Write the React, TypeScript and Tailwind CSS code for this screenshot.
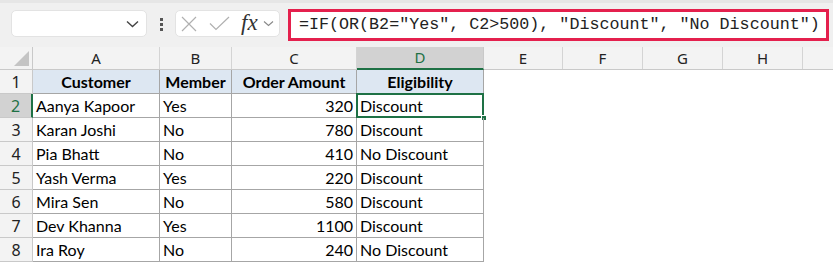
import React from 'react';

const cols = [
    { key: 'A', w: 127 },
    { key: 'B', w: 72 },
    { key: 'C', w: 125 },
    { key: 'D', w: 127 },
    { key: 'E', w: 79 },
    { key: 'F', w: 80 },
    { key: 'G', w: 80 },
    { key: 'H', w: 80 },
];

const data = [
    ['Aanya Kapoor', 'Yes', '320', 'Discount'],
    ['Karan Joshi', 'No', '780', 'Discount'],
    ['Pia Bhatt', 'No', '410', 'No Discount'],
    ['Yash Verma', 'Yes', '220', 'Discount'],
    ['Mira Sen', 'No', '580', 'Discount'],
    ['Dev Khanna', 'Yes', '1100', 'Discount'],
    ['Ira Roy', 'No', '240', 'No Discount'],
];

const cellFont = { fontFamily: 'Lato, "Noto Sans", sans-serif' };

export default function App() {
    return (
        <div className="w-[833px] h-[264px] overflow-hidden bg-white relative" style={{ fontFamily: '"Noto Sans", sans-serif' }}>
            {/* Toolbar / formula bar */}
            <div className="h-[47px] bg-[#f0f0f0] border-t-[3px] border-[#e6e6e6] flex items-start">
                <div className="ml-[11px] mt-[7px] w-[136px] h-[27px] bg-white rounded-[5px] border border-[#e3e3e3] flex items-center justify-end pr-[7px]">
                    <svg width="13" height="8" viewBox="0 0 13 8" fill="none" stroke="#444" strokeWidth="1.4">
                        <path d="M1 1.5 L6.5 6.5 L12 1.5" />
                    </svg>
                </div>
                <div className="w-[28px] h-[34px] flex flex-col items-center justify-center gap-[2px] mt-[4px]">
                    <span className="w-[3px] h-[3px] bg-[#555]" />
                    <span className="w-[3px] h-[3px] bg-[#555]" />
                    <span className="w-[3px] h-[3px] bg-[#555]" />
                </div>
                <div className="mt-[7px] w-[105px] h-[27px] bg-white rounded-[5px] border border-[#e3e3e3] flex items-center">
                    <svg className="ml-[5px]" width="16" height="16" viewBox="0 0 16 16" fill="none" stroke="#b0b0b0" strokeWidth="1.2">
                        <path d="M1 1 L15 15 M15 1 L1 15" />
                    </svg>
                    <svg className="ml-[12px]" width="21" height="15" viewBox="0 0 21 15" fill="none" stroke="#b0b0b0" strokeWidth="1.2">
                        <path d="M1 7.5 L7 13.5 L20 1" />
                    </svg>
                    <span className="ml-[11px] text-[23px] leading-none italic text-[#333] -mt-[3px]" style={{ fontFamily: '"Liberation Serif", serif' }}>
                        fx
                    </span>
                    <svg className="ml-[5px]" width="11" height="7" viewBox="0 0 11 7" fill="none" stroke="#888" strokeWidth="1.1">
                        <path d="M1 1.5 L5.5 5.5 L10 1.5" />
                    </svg>
                </div>
                <div className="ml-[8px] mt-[6px] w-[541px] h-[32px] bg-white border-[3px] border-[#e4204d] flex items-center pl-[8px]">
                    <span className="text-[16.7px] leading-none text-[#222] whitespace-nowrap" style={{ fontFamily: '"Liberation Mono", monospace' }}>
                        =IF(OR(B2="Yes", C2&gt;500), "Discount", "No Discount")
                    </span>
                </div>
            </div>

            {/* Column headers */}
            <div className="flex h-[23px] bg-[#f3f3f3] border-b border-[#c9c9c9]">
                <div className="w-[33px] shrink-0 border-r border-[#c9c9c9] relative">
                    <svg className="absolute right-[3px] bottom-[3px]" width="15" height="15" viewBox="0 0 15 15">
                        <path d="M15 0 L15 15 L0 15 Z" fill="#c4c4c4" />
                    </svg>
                </div>
                {cols.map(c => (
                    <div
                        key={c.key}
                        style={{ width: c.w }}
                        className={
                            c.key === 'D'
                                ? 'shrink-0 flex items-center justify-center text-[15px] text-[#1e7145] bg-[#d2d2d2] border-r border-[#c9c9c9] border-b-2 border-b-[#1e7145] -mb-px'
                                : 'shrink-0 flex items-center justify-center text-[15px] text-[#222] border-r border-[#d4d4d4]'
                        }
                    >
                        {c.key}
                    </div>
                ))}
                <div className="flex-1" />
            </div>

            {/* Header row 1 */}
            <div className="flex h-[24px]">
                <div className="w-[33px] shrink-0 bg-[#f3f3f3] border-r border-b border-[#c9c9c9] flex items-center justify-center text-[16px] text-[#222]">1</div>
                {['Customer', 'Member', 'Order Amount', 'Eligibility'].map((h, i) => (
                    <div
                        key={h}
                        style={{ width: cols[i].w, ...cellFont }}
                        className="shrink-0 bg-[#dde7f2] border-r border-b border-[#a6a6a6] flex items-center justify-center font-bold text-[16px] text-black"
                    >
                        {h}
                    </div>
                ))}
            </div>

            {/* Data rows */}
            {data.map((row, r) => {
                const selected = r === 0;
                return (
                    <div key={r} className="flex h-[24px]">
                        <div
                            className={
                                selected
                                    ? 'w-[33px] shrink-0 bg-[#d2d2d2] border-b border-[#c9c9c9] border-r-2 border-r-[#1e7145] flex items-center justify-center text-[16px] text-[#1e7145]'
                                    : 'w-[33px] shrink-0 bg-[#f3f3f3] border-r border-b border-[#c9c9c9] flex items-center justify-center text-[16px] text-[#222]'
                            }
                        >
                            {r + 2}
                        </div>
                        {row.map((v, i) => (
                            <div
                                key={i}
                                style={{ width: cols[i].w, ...cellFont }}
                                className={
                                    'shrink-0 border-r border-b border-[#a6a6a6] flex items-center text-[16px] text-black relative ' +
                                    (i === 2 ? 'justify-end pr-[3px]' : 'pl-[3px]')
                                }
                            >
                                {v}
                                {selected && i === 3 && (
                                    <>
                                        <div className="absolute -left-px -top-px -right-px -bottom-px border-2 border-[#1e7145] pointer-events-none" />
                                        <div className="absolute -right-[4px] -bottom-[4px] w-[6px] h-[6px] bg-[#1e7145] border border-white" />
                                    </>
                                )}
                            </div>
                        ))}
                    </div>
                );
            })}
        </div>
    );
}
